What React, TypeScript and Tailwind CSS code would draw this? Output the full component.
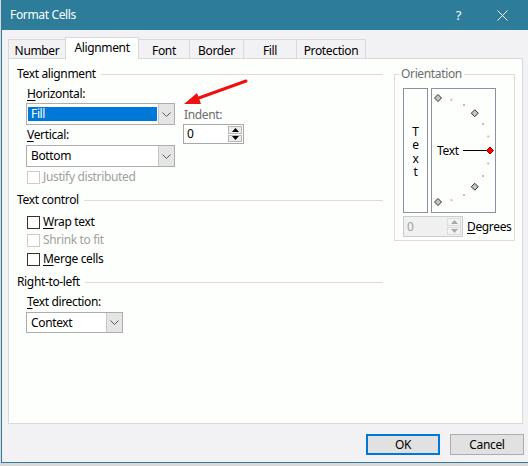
import React from "react";

// Format Cells dialog, Alignment tab

function Ul({ children }: { children: React.ReactNode }) {
  return <span className="underline underline-offset-[2px] decoration-[1px]">{children}</span>;
}

function Heading({ label }: { label: string }) {
  return (
    <div className="flex items-center h-[16px]">
      <span>{label}</span>
      <div className="flex-1 h-px bg-[#dcdcdc] ml-[5px]" />
    </div>
  );
}

function Chevron() {
  return (
    <svg width="9" height="5" viewBox="0 0 9 5">
      <polyline points="0.5,0.5 4.5,4.5 8.5,0.5" fill="none" stroke="#5a5a5a" strokeWidth="1" />
    </svg>
  );
}

function Select({ value, width, height, selected }: { value: string; width: string; height: string; selected?: boolean }) {
  return (
    <div className={`flex border border-[#adadad] bg-white ${width} ${height}`}>
      <div className="flex-1 flex items-center px-px">
        {selected ? (
          <div className="w-full h-[14px] bg-[#0078d7] text-white flex items-center pl-[3px]">{value}</div>
        ) : (
          <span className="pl-[3px]">{value}</span>
        )}
      </div>
      <div className="w-[16px] bg-[#e5e5e5] border-l border-[#c6c6c6] flex items-center justify-center">
        <Chevron />
      </div>
    </div>
  );
}

function Spinner({ disabled }: { disabled?: boolean }) {
  const tri = disabled ? "#a8a8a8" : "#000";
  const btn = disabled ? "border-[#dcdcdc] bg-[#f2f2f2]" : "border-[#b8b8b8] bg-[#ececec]";
  return (
    <div
      className={`flex w-full h-full border ${disabled ? "border-[#cccccc] bg-[#f0f0f0] text-[#a0a0a0]" : "border-[#a9a9a9] bg-white"}`}
    >
      <div className="flex-1 flex items-center pl-[3px]">0</div>
      <div className="w-[16px] flex flex-col gap-px p-px">
        <div className={`flex-1 flex items-center justify-center border ${btn}`}>
          <svg width="7" height="4" viewBox="0 0 7 4">
            <polygon points="3.5,0 7,4 0,4" fill={tri} />
          </svg>
        </div>
        <div className={`flex-1 flex items-center justify-center border ${btn}`}>
          <svg width="7" height="4" viewBox="0 0 7 4">
            <polygon points="0,0 7,0 3.5,4" fill={tri} />
          </svg>
        </div>
      </div>
    </div>
  );
}

function Check({ label, disabled }: { label: React.ReactNode; disabled?: boolean }) {
  return (
    <div className={`flex items-center h-[16px] ml-[10px] ${disabled ? "text-[#a0a0a0]" : ""}`}>
      <div className={`w-[13px] h-[13px] border bg-white ${disabled ? "border-[#cccccc]" : "border-[#333333]"}`} />
      <span className="ml-[3px]">{label}</span>
    </div>
  );
}

const tabs = [
  { name: "Number", w: "w-[58px]" },
  { name: "Alignment", w: "w-[74px]" },
  { name: "Font", w: "w-[52px]" },
  { name: "Border", w: "w-[55px]" },
  { name: "Fill", w: "w-[54px]" },
  { name: "Protection", w: "w-[70px]" },
];

// dial points, center (6,61), radius 52
const R = 52;
const CX = 6;
const CY = 61;
const pt = (deg: number) => {
  const a = (deg * Math.PI) / 180;
  return { x: CX + R * Math.cos(a), y: CY - R * Math.sin(a) };
};

function Diamond({ x, y, red }: { x: number; y: number; red?: boolean }) {
  const s = 3.5;
  return (
    <polygon
      points={`${x},${y - s} ${x + s},${y} ${x},${y + s} ${x - s},${y}`}
      fill={red ? "#ff0000" : "#c4c4c4"}
      stroke={red ? "#a00000" : "#333"}
      strokeWidth="1"
    />
  );
}

function Dial() {
  const dots = [75, 60, 30, 15, -15, -30, -60, -75];
  const diamonds = [90, 45, -45, -90];
  return (
    <div className="relative w-[65px] h-[125px] border border-[#8e8fa0]">
      <svg className="absolute inset-0" width="63" height="123" viewBox="0 0 63 123">
        {dots.map((d) => {
          const p = pt(d);
          return <rect key={d} x={p.x - 1} y={p.y - 1} width="2" height="2" fill="#c0c0c0" />;
        })}
        {diamonds.map((d) => {
          const p = pt(d);
          return <Diamond key={d} x={p.x} y={p.y} />;
        })}
        <line x1="31" y1="61.5" x2="56" y2="61.5" stroke="#000" strokeWidth="1" />
        <Diamond x={58} y={61.5} red />
      </svg>
      <span className="absolute left-[5px] top-[54px] leading-[16px]">Text</span>
    </div>
  );
}

export default function App() {
  return (
    <div className="w-[528px] h-[466px] overflow-hidden bg-[#d9d9d9] font-['Segoe_UI','Noto_Sans',sans-serif] text-[12px] leading-[16px] tracking-[-0.35px] text-black relative">
      <div className="ml-px w-[540px] h-[463px] border-l border-b border-[#2d7d9a] bg-[#f2f1f4] flex flex-col">
        {/* title bar */}
        <div className="h-[30px] bg-[#2d7d9a] flex items-center text-white pl-[8px]">
          <span>Format Cells</span>
          <span className="ml-auto text-[13px]">?</span>
          <svg className="ml-[36px] mr-[33px]" width="11" height="11" viewBox="0 0 11 11">
            <path d="M0.5 0.5 L10.5 10.5 M10.5 0.5 L0.5 10.5" stroke="#fff" strokeWidth="1" />
          </svg>
        </div>

        <div className="pl-[6px]">
          {/* tabs */}
          <div className="h-[28px] flex items-end">
            {tabs.map((t, i) => {
              const active = t.name === "Alignment";
              return (
                <div
                  key={t.name}
                  className={`${t.w} ${i > 0 ? "-ml-px" : ""} border-t border-l border-r border-[#d9d9d9] flex justify-center ${
                    active
                      ? "h-[22px] -mb-px bg-[#fdfffd] relative z-10 pt-[2px]"
                      : "h-[19px] bg-[#f2f1f4] pt-[3px]"
                  }`}
                >
                  {t.name}
                </div>
              );
            })}
          </div>

          {/* panel */}
          <div className="w-[515px] h-[366px] border border-[#d9d9d9] bg-[#fdfffd] flex pt-[7px] pl-[8px]">
            <div className="w-[366px] flex flex-col">
              <Heading label="Text alignment" />
              <div className="mt-[4px] flex ml-[9px]">
                <div className="flex flex-col">
                  <div className="pl-px">
                    <Ul>H</Ul>orizontal:
                  </div>
                  <div className="mt-px">
                    <Select value="Fill" width="w-[149px]" height="h-[22px]" selected />
                  </div>
                  <div className="pl-px mt-[2px]">
                    <Ul>V</Ul>ertical:
                  </div>
                  <div className="mt-[2px]">
                    <Select value="Bottom" width="w-[149px]" height="h-[22px]" />
                  </div>
                </div>
                <div className="ml-[8px] pt-[21px] flex flex-col">
                  <div className="pl-px text-[#6d6d6d]">Indent:</div>
                  <div className="mt-px w-[61px] h-[20px]">
                    <Spinner />
                  </div>
                </div>
              </div>
              <div className="mt-[2px]">
                <Check label="Justify distributed" disabled />
              </div>
              <div className="mt-[7px]">
                <Heading label="Text control" />
              </div>
              <div className="mt-[6px]">
                <Check label={<><Ul>W</Ul>rap text</>} />
              </div>
              <div className="mt-[2px]">
                <Check label="Shrink to fit" disabled />
              </div>
              <div className="mt-[3px]">
                <Check label={<><Ul>M</Ul>erge cells</>} />
              </div>
              <div className="mt-[7px]">
                <Heading label="Right-to-left" />
              </div>
              <div className="mt-[4px] ml-[10px]">
                <Ul>T</Ul>ext direction:
              </div>
              <div className="mt-[2px] ml-[9px]">
                <Select value="Context" width="w-[97px]" height="h-[21px]" />
              </div>
            </div>

            {/* orientation */}
            <div className="ml-[11px] mt-[8px] w-[121px] h-[167px] border border-[#dcdcdc] relative pl-[8px] pt-[13px]">
              <span className="absolute left-[4px] -top-[9px] px-[2px] bg-[#fdfffd] text-[#6d6d6d]">Orientation</span>
              <div className="flex gap-[3px]">
                <div className="w-[25px] h-[125px] border border-[#8e8fa0] flex items-center justify-center pt-[2px]">
                  <span className="whitespace-pre-line text-center leading-[13.5px]">{"T\ne\nx\nt"}</span>
                </div>
                <Dial />
              </div>
              <div className="mt-[3px] flex items-center">
                <div className="w-[60px] h-[21px]">
                  <Spinner disabled />
                </div>
                <span className="ml-[4px]">
                  <Ul>D</Ul>egrees
                </span>
              </div>
            </div>
          </div>

          {/* buttons */}
          <div className="w-[516px] flex justify-end gap-[10px] mt-[10px]">
            <div className="w-[74px] h-[21px] border-2 border-[#0078d7] bg-[#e1e1e1] flex items-center justify-center">OK</div>
            <div className="w-[74px] h-[21px] border border-[#adadad] bg-[#e1e1e1] flex items-center justify-center">Cancel</div>
          </div>
        </div>
      </div>

      {/* annotation arrow */}
      <svg className="absolute left-0 top-0 pointer-events-none" width="528" height="466" viewBox="0 0 528 466">
        <line x1="246" y1="81" x2="196" y2="99" stroke="#ee1111" strokeWidth="3" strokeLinecap="round" />
        <polygon points="184,104 197,93 201,104" fill="#ee1111" />
      </svg>
    </div>
  );
}
